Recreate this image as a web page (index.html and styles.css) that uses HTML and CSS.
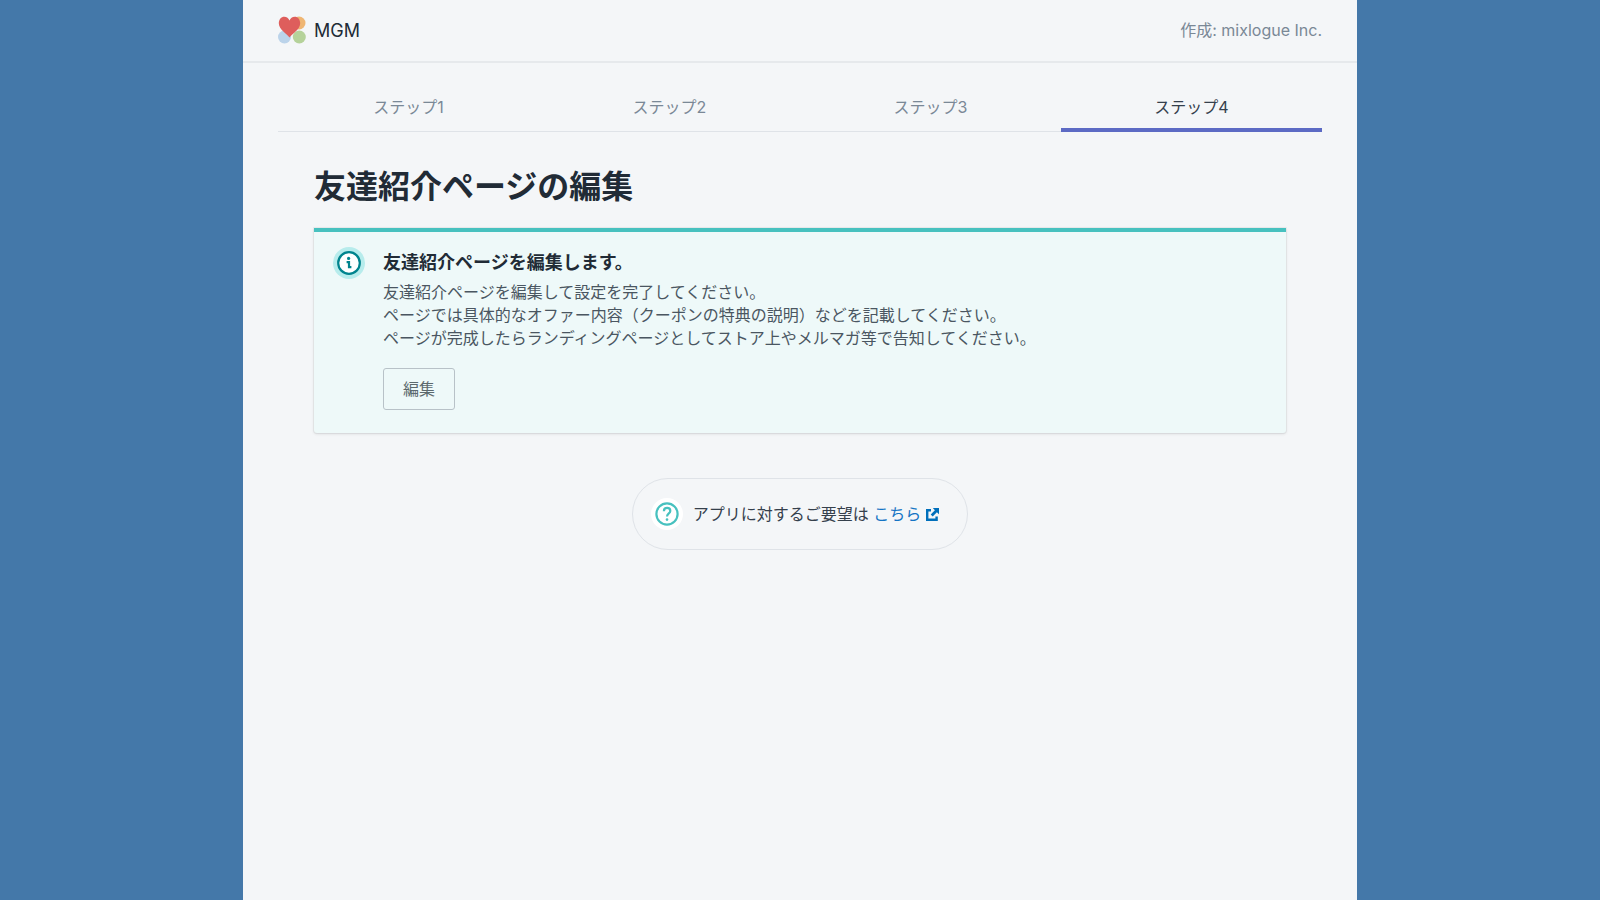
FILE: index.html
```html
<!DOCTYPE html>
<html lang="ja">
<head>
<meta charset="utf-8">
<meta name="viewport" content="width=device-width, initial-scale=1">
<title>MGM</title>
<link rel="stylesheet" href="styles.css">
</head>
<body>
<div class="app">
  <header class="app-header">
    <div class="brand">
      <svg class="brand-logo" viewBox="0 0 28 28" aria-hidden="true">
        <circle cx="21" cy="7" r="6.5" fill="#efb673"/>
        <circle cx="6.5" cy="21" r="6.5" fill="#bbd3ea"/>
        <circle cx="21.3" cy="21" r="6.5" fill="#b5d29a"/>
        <path d="M11.5 21.5C9.500 18.200 0.800 13.600 0.800 7.300C0.800 3.500 3.200 0.800 6.300 0.800C8.700 0.800 10.600 2.300 11.500 4.600C12.400 2.300 14.300 0.800 16.700 0.800C19.800 0.800 22.200 3.500 22.200 7.300C22.200 13.600 13.500 18.200 11.500 21.500Z" fill="#de5e5c"/>
      </svg>
      <span class="brand-name">MGM</span>
    </div>
    <span class="author">作成: mixlogue Inc.</span>
  </header>
  <nav class="tabs" role="tablist">
    <button class="tab" type="button" role="tab">ステップ1</button>
    <button class="tab" type="button" role="tab">ステップ2</button>
    <button class="tab" type="button" role="tab">ステップ3</button>
    <button class="tab tab-active" type="button" role="tab" aria-selected="true">ステップ4</button>
  </nav>
  <main class="content">
    <h1 class="page-title">友達紹介ページの編集</h1>
    <section class="banner">
      <svg class="banner-icon" viewBox="0 0 32 32" aria-hidden="true">
        <circle cx="16" cy="16" r="16" fill="#b7ecec"/>
        <circle cx="16" cy="16" r="10.800" fill="#fff" stroke="#00848e" stroke-width="2.200"/>
        <circle cx="15.600" cy="11.400" r="1.600" fill="#00848e"/>
        <path d="M13.600 15.200H16V20.200H18.400" fill="none" stroke="#00848e" stroke-width="2.200"/>
      </svg>
      <div class="banner-body">
        <h2 class="banner-title">友達紹介ページを編集します。</h2>
        <p class="banner-text">友達紹介ページを編集して設定を完了してください。<br>ページでは具体的なオファー内容（クーポンの特典の説明）などを記載してください。<br>ページが完成したらランディングページとしてストア上やメルマガ等で告知してください。</p>
        <button class="edit-button" type="button">編集</button>
      </div>
    </section>
  </main>
  <footer class="help">
    <svg class="help-icon" viewBox="0 0 32 32" aria-hidden="true">
      <circle cx="16" cy="16" r="16" fill="#fff"/>
      <circle cx="16" cy="16" r="10.600" fill="none" stroke="#47c1bf" stroke-width="2.200"/>
      <path d="M12.900 13.200C12.900 11.100 14.300 9.900 16.100 9.900C17.900 9.900 19.300 11.100 19.300 12.900C19.300 15.400 16 15.400 16 18.600" fill="none" stroke="#47c1bf" stroke-width="2.200"/>
      <circle cx="16" cy="21.600" r="1.300" fill="#47c1bf"/>
    </svg>
    <p class="help-text">アプリに対するご要望は <a class="help-link" href="#">こちら<svg class="external-icon" viewBox="0 0 13 13" aria-hidden="true">
      <path d="M5 2.200H1.200V11.800H10.600V8.500" fill="none" stroke="#006fbb" stroke-width="2.400"/>
      <path d="M6.800 0H13V6.200L10.900 4.200L6.700 8.400L4.700 6.400L8.900 2.200Z" fill="#006fbb"/>
    </svg></a></p>
  </footer>
</div>
</body>
</html>
```
FILE: styles.css
```css
* {
  box-sizing: border-box;
}

body {
  margin: 0;
  background: #4478a9;
  color: #212b36;
  font-family: Inter, "Noto Sans CJK JP", sans-serif;
  font-size: 16px;
}

.app {
  max-width: 1114px;
  min-height: 100vh;
  margin: 0 auto;
  background: #f4f6f8;
}

.app-header {
  display: flex;
  align-items: center;
  justify-content: space-between;
  padding: 15px 35px 16px;
  border-bottom: 2px solid #e6e9ec;
}

.brand {
  display: flex;
  align-items: center;
  gap: 8px;
}

.brand-logo {
  width: 28px;
  height: 28px;
}

.brand-name {
  padding-top: 2px;
  font-size: 18px;
  line-height: 28px;
}

.author {
  color: #7a8896;
  line-height: 28px;
}

.tabs {
  display: flex;
  margin: 24px 35px 0;
  box-shadow: inset 0 -1px #dfe3e8;
}

.tab {
  flex: 1;
  padding: 8px 0 9px;
  border: 0;
  border-bottom: 4px solid transparent;
  background: none;
  color: #7a8896;
  font: inherit;
  line-height: 24px;
}

.tab-active {
  border-bottom-color: #5c6ac4;
  color: #35404c;
}

.content {
  padding: 32px 71px 0;
}

.page-title {
  margin: 0;
  font-size: 32px;
  font-weight: 600;
  line-height: 46px;
}

.banner {
  display: flex;
  gap: 18px;
  margin-top: 18px;
  padding: 15px 19px 23px;
  border-top: 4px solid #47c1bf;
  border-radius: 0 0 3px 3px;
  background: #eef9f9;
  box-shadow: 0 0 0 1px rgba(63, 63, 68, 0.05), 0 1px 3px rgba(63, 63, 68, 0.15);
}

.banner-icon {
  flex: none;
  width: 32px;
  height: 32px;
}

.banner-body {
  padding-top: 3px;
}

.banner-title {
  margin: 0;
  font-size: 18px;
  font-weight: 600;
  line-height: 26px;
}

.banner-text {
  margin: 5px 0 18px;
  color: #4a5661;
  line-height: 23px;
}

.edit-button {
  padding: 9px 19px;
  border: 1px solid #b8c2c8;
  border-radius: 3px;
  background: none;
  color: #5c696d;
  font: inherit;
  line-height: 22px;
}

.help {
  display: flex;
  align-items: center;
  gap: 10px;
  width: fit-content;
  margin: 45px auto 0;
  padding: 19px 28px 19px 18px;
  border: 1px solid #dfe3e8;
  border-radius: 36px;
}

.help-icon {
  width: 32px;
  height: 32px;
}

.help-text {
  margin: 0;
  color: #35404c;
  line-height: 24px;
}

.help-link {
  color: #1474c4;
  text-decoration: none;
}

.external-icon {
  width: 13px;
  height: 13px;
  margin-left: 5px;
  vertical-align: -1px;
}
```
